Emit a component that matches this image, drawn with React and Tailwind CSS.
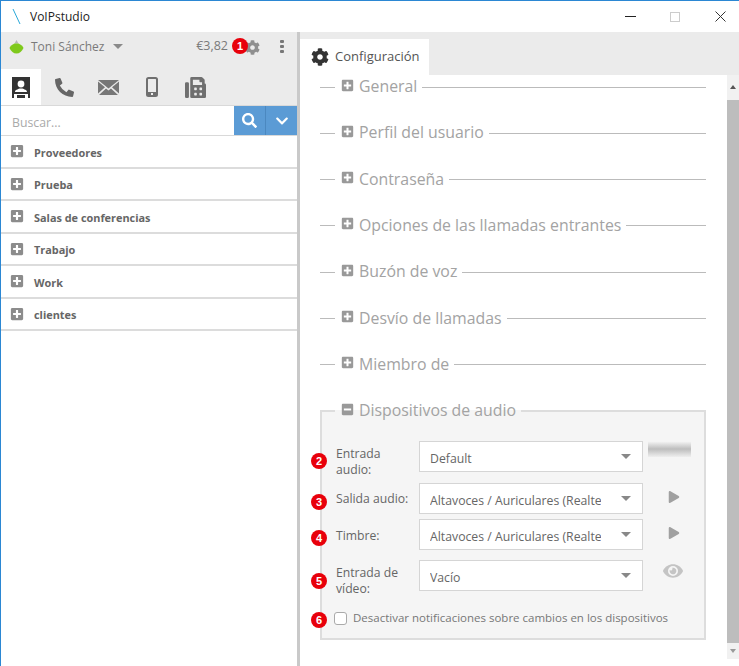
import React from 'react';
import { FaCog, FaSearch, FaChevronDown, FaPlusSquare, FaMinusSquare, FaEye, FaPhoneAlt, FaFax, FaPlay } from 'react-icons/fa';

const groups = ['Proveedores', 'Prueba', 'Salas de conferencias', 'Trabajo', 'Work', 'clientes'];
const sections = ['General', 'Perfil del usuario', 'Contraseña', 'Opciones de las llamadas entrantes', 'Buzón de voz', 'Desvío de llamadas', 'Miembro de'];

const Badge = ({ n, className }) => (
  <span className={`absolute z-10 w-4 h-4 rounded-full bg-[#e8000b] text-white text-[11px] font-bold leading-4 text-center font-['Liberation_Sans',sans-serif] ${className}`}>
    {n}
  </span>
);

const Caret = ({ className }) => (
  <span className={`w-0 h-0 border-l-[5px] border-r-[5px] border-t-[5px] border-l-transparent border-r-transparent border-t-[#8a8a8a] ${className}`} />
);

const ContactIcon = () => (
  <svg width="20" height="21" viewBox="0 0 20 21">
    <path d="M1 0h18v18h-2v-1H3v1H1z" fill="#333" />
    <rect x="1" y="18" width="2" height="3" fill="#333" />
    <rect x="17" y="18" width="2" height="3" fill="#333" />
    <rect x="6" y="18" width="8" height="3" fill="#333" />
    <circle cx="10" cy="7" r="3.4" fill="#fff" />
    <path d="M4 15c0-2.5 3-2.5 4.5-3.5h3C13 12.500 16 12.500 16 15z" fill="#fff" />
  </svg>
);

const MailIcon = () => (
  <svg width="21" height="15" viewBox="0 0 21 15" fill="#777">
    <path d="M0 0h21L10.500 8.500z" />
    <path d="M0 1.500v12l7-6.300z" />
    <path d="M21 1.500v12l-7-6.300z" />
    <path d="M1 15l7-6.500 2.500 2 2.500-2 7 6.500z" />
  </svg>
);

const MobileIcon = () => (
  <svg width="12" height="20" viewBox="0 0 12 20">
    <rect x="1" y="1" width="10" height="18" rx="1.500" fill="none" stroke="#6f6f6f" strokeWidth="2" />
    <rect x="1" y="15" width="10" height="4" fill="#6f6f6f" />
    <rect x="5" y="16" width="2" height="2" fill="#eee" />
  </svg>
);

const DeviceSelect = ({ value }) => (
  <div className="w-[224px] h-[31px] shrink-0 bg-white border border-[#d5d5d5] flex items-center pl-[10px] pr-[11px] justify-between">
    <span className="w-[171px] pt-[6px] overflow-hidden whitespace-nowrap text-[12.250px] text-[#666]">{value}</span>
    <Caret className="border-t-[#888]" />
  </div>
);

const SectionRow = ({ title }) => (
  <div className="h-5 mb-[26.300px] flex items-center text-[15.850px] text-[#a3a3a3]">
    <span className="w-[15px] h-px bg-[#bbb] shrink-0" />
    <FaPlusSquare className="ml-[6px] mr-[5px] mb-[4px] text-[13px] text-[#999] shrink-0" />
    <span className="mr-[5px] whitespace-nowrap">{title}</span>
    <span className="flex-1 h-px bg-[#bbb]" />
  </div>
);

export default function App() {
  return (
    <div className="w-[739px] h-[666px] overflow-hidden bg-white border-t border-l border-[#2b87d3] flex flex-col font-['Open_Sans',sans-serif]">
      {/* title bar */}
      <div className="h-[31px] shrink-0 flex items-center">
        <svg className="ml-[11px]" width="10" height="17" viewBox="0 0 10 17">
          <path d="M1 1l7 15" stroke="#2aa8d8" strokeWidth="1" fill="none" />
        </svg>
        <span className="ml-[8px] text-[12px] text-[#222]">VoIPstudio</span>
        <div className="ml-auto flex items-center">
          <span className="w-[11px] h-[1.500px] bg-[#222]" />
          <span className="ml-[34px] w-[10px] h-[10px] border border-[#ccc]" />
          <svg className="ml-[35px] mr-[13px]" width="11" height="11" viewBox="0 0 11 11">
            <path d="M0.500 0.500l10 10M10.500 0.500l-10 10" stroke="#333" strokeWidth="1" />
          </svg>
        </div>
      </div>

      <div className="flex-1 flex min-h-0">
        {/* left panel */}
        <div className="w-[296px] shrink-0 flex flex-col">
          <div className="bg-[#ebebeb] h-[73px] shrink-0 flex flex-col">
            <div className="h-[29px] mb-[8px] shrink-0 flex items-center relative">
              <svg className="ml-[8px]" width="15" height="14" viewBox="0 0 15 14">
                <path d="M7.500 0L9.500 3.500H5.500z" fill="#b5b5b5" />
                <path d="M5.500 3.500h4C12 4.500 14 6.500 14.500 8c-1.500 3.500-4 5.500-7 5.500S2 11.500 0.500 8C1 6.500 3 4.500 5.500 3.500z" fill="#7fc91c" />
              </svg>
              <span className="ml-[7px] text-[12px] text-[#7a7a7a]">Toni Sánchez</span>
              <Caret className="ml-[9px]" />
              <span className="ml-auto mr-[69px] text-[12.500px] text-[#7a7a7a]">€3,82</span>
              <Badge n="1" className="left-[231px] top-[6px]" />
              <FaCog className="absolute left-[244px] top-[8px] text-[15px] text-[#8f8f8f]" />
              <span className="absolute left-[279px] top-[8px] flex flex-col gap-[2px]">
                <span className="w-[4px] h-[3px] rounded-[1px] bg-[#777]" />
                <span className="w-[4px] h-[3px] rounded-[1px] bg-[#777]" />
                <span className="w-[4px] h-[3px] rounded-[1px] bg-[#777]" />
              </span>
            </div>
            <div className="h-[36px] flex">
              <div className="w-[40px] bg-white flex items-center justify-center"><ContactIcon /></div>
              <div className="w-[47px] flex items-center justify-center"><FaPhoneAlt className="text-[19px] text-[#666]" /></div>
              <div className="w-[40px] flex items-center justify-center"><MailIcon /></div>
              <div className="w-[48px] flex items-center justify-center"><MobileIcon /></div>
              <div className="w-[38px] flex items-center justify-center"><FaFax className="text-[21px] text-[#6f6f6f]" /></div>
            </div>
          </div>

          <div className="h-[31px] shrink-0 flex border-t border-b border-[#d9d9d9]">
            <div className="flex-1 flex items-center pl-[11px] pt-[6px] text-[12.250px] text-[#aaa]">Buscar...</div>
            <div className="w-[32px] bg-[#5b9bd5] flex items-center justify-center border-r border-[#4b88c0]">
              <FaSearch className="text-[15px] text-white" />
            </div>
            <div className="w-[31px] bg-[#5b9bd5] flex items-center justify-center">
              <FaChevronDown className="text-[14px] text-white" />
            </div>
          </div>

          {groups.map((g) => (
            <div key={g} className="h-[32.500px] shrink-0 flex items-center border-b-2 border-[#dcdcdc]">
              <FaPlusSquare className="ml-[9px] text-[14px] text-[#8c8c8c]" />
              <span className="ml-[10px] pt-[3px] text-[10.900px] font-bold text-[#666]">{g}</span>
            </div>
          ))}
        </div>

        {/* divider */}
        <div className="w-[3px] shrink-0 bg-[#c9c9c9]" />

        {/* right panel */}
        <div className="flex-1 min-w-0 flex flex-col">
          <div className="h-[43px] shrink-0 bg-[#ebebeb] flex items-end">
            <div className="w-[129px] h-[36px] bg-white flex items-center pl-[11px]">
              <FaCog className="text-[18px] text-[#333]" />
              <span className="ml-[6px] text-[13px] text-[#555]">Configuración</span>
            </div>
          </div>

          <div className="flex-1 min-h-0 flex">
            <div className="w-[427px] shrink-0 overflow-hidden pt-[2px] pl-[20px] pr-[21px]">
              {sections.map((s) => <SectionRow key={s} title={s} />)}

              <fieldset className="relative h-[239px] mt-px border-2 border-[#dddddd] bg-[#f5f5f5] pl-[14px]">
                <legend className="-ml-px h-5 flex items-center pr-[5px] pl-[6px] text-[15.850px] text-[#a3a3a3] whitespace-nowrap">
                  <FaMinusSquare className="mr-[5px] mb-[4px] text-[13px] text-[#999]" />
                  Dispositivos de audio
                </legend>

                <div className="relative flex items-center h-[31px] mt-[20px]">
                  <Badge n="2" className="left-[-25px] top-[12px]" />
                  <span className="w-[83px] shrink-0 text-[12.200px] leading-[16.500px] text-[#666] pt-[11px]">Entrada audio:</span>
                  <DeviceSelect value="Default" />
                  <div className="ml-[5px] w-[43px] h-[16px] mb-[15px] bg-gradient-to-b from-[#f8f8f8] via-[#bdbdbd] to-[#efefef]" />
                </div>

                <div className="relative flex items-center h-[31px] mt-[11px]">
                  <Badge n="3" className="left-[-25px] top-[11px]" />
                  <span className="w-[83px] shrink-0 text-[12.200px] text-[#666] pt-[2px]">Salida audio:</span>
                  <DeviceSelect value="Altavoces / Auriculares (Realtek High Definition Audio)" />
                  <FaPlay className="ml-[25px] mb-[3px] text-[12px] text-[#a0a0a0]" />
                </div>

                <div className="relative flex items-center h-[31px] mt-[5px]">
                  <Badge n="4" className="left-[-25px] top-[11px]" />
                  <span className="w-[83px] shrink-0 text-[12.200px] text-[#666] pt-[3px]">Timbre:</span>
                  <DeviceSelect value="Altavoces / Auriculares (Realtek High Definition Audio)" />
                  <FaPlay className="ml-[25px] mb-[3px] text-[12px] text-[#a0a0a0]" />
                </div>

                <div className="relative flex items-center h-[31px] mt-[10px]">
                  <Badge n="5" className="left-[-25px] top-[13px]" />
                  <span className="w-[83px] shrink-0 text-[12.200px] leading-[16.500px] text-[#666] pt-[11px]">Entrada de vídeo:</span>
                  <DeviceSelect value="Vacío" />
                  <FaEye className="ml-[20px] mb-[9px] text-[20px] text-[#c4c4c4]" />
                </div>

                <div className="relative flex h-[23px] mt-[18px] overflow-hidden -ml-[14px] pl-[12px]">
                  <span className="w-[13px] h-[13px] mt-[3px] shrink-0 rounded-[3px] border border-[#aaa] bg-white" />
                  <span className="ml-[6px] w-[330px] text-[11.500px] leading-[18px] text-[#777]">
                    Desactivar notificaciones sobre cambios en los dispositivos de audio
                  </span>
                </div>
                <Badge n="6" className="left-[-11px] top-[191px]" />
              </fieldset>
            </div>

            {/* scrollbar */}
            <div className="w-[12px] h-[584px] shrink-0 ml-auto bg-[#f1f1f1] flex flex-col items-center">
              <div className="h-[25px] shrink-0 flex items-center justify-center pb-[2px]">
                <span className="w-0 h-0 border-l-[3.500px] border-r-[3.500px] border-b-[4px] border-l-transparent border-r-transparent border-b-[#555]" />
              </div>
              <div className="flex-1 w-full bg-[#bdbdbd]" />
              <div className="h-[16px] shrink-0 flex items-center justify-center">
                <span className="w-0 h-0 border-l-[3.500px] border-r-[3.500px] border-t-[4px] border-l-transparent border-r-transparent border-t-[#999]" />
              </div>
            </div>
          </div>
        </div>
      </div>
    </div>
  );
}
